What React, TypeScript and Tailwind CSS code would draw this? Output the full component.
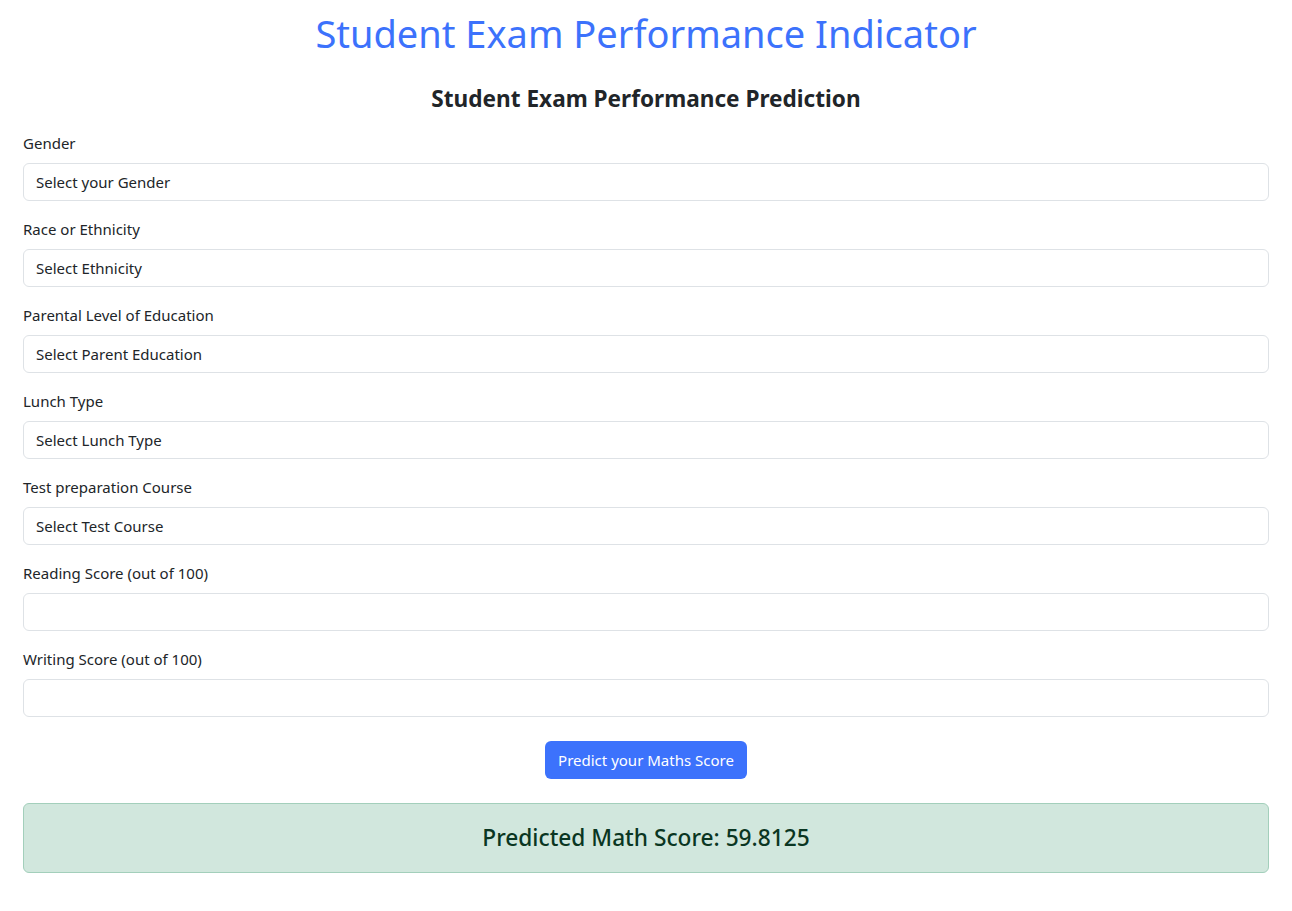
import React from 'react';

type FieldProps = {
  label: string;
  placeholder?: string;
};

const Field = ({ label, placeholder }: FieldProps) => {
  return (
    <div className="mb-4">
      <label className="block mb-2 text-[15px] leading-6 text-[#212529]">{label}</label>
      <div className="h-[38px] w-full rounded-[6px] border border-[#dee2e6] bg-white px-3 flex items-center text-[15px] text-[#212529]">
        {placeholder}
      </div>
    </div>
  );
};

const fields: FieldProps[] = [
  { label: 'Gender', placeholder: 'Select your Gender' },
  { label: 'Race or Ethnicity', placeholder: 'Select Ethnicity' },
  { label: 'Parental Level of Education', placeholder: 'Select Parent Education' },
  { label: 'Lunch Type', placeholder: 'Select Lunch Type' },
  { label: 'Test preparation Course', placeholder: 'Select Test Course' },
  { label: 'Reading Score (out of 100)' },
  { label: 'Writing Score (out of 100)' },
];

export default function App() {
  return (
    <div
      className="min-h-screen bg-white px-[23px]"
      style={{ fontFamily: '"Noto Sans", "Open Sans", sans-serif' }}
    >
      <h1 className="pt-[9px] text-center text-[38px] leading-[48px] text-[#3c72fc]">
        Student Exam Performance Indicator
      </h1>
      <h2 className="mt-[27px] mb-[18px] text-center text-[22.6px] leading-[29px] font-bold text-[#212529]">
        Student Exam Performance Prediction
      </h2>
      <form>
        {fields.map((f) => (
          <Field key={f.label} label={f.label} placeholder={f.placeholder} />
        ))}
        <div className="mt-6 flex justify-center">
          <button
            type="button"
            className="h-[38px] rounded-[6px] bg-[#3c72fc] px-[13px] text-[15px] text-white"
          >
            Predict your Maths Score
          </button>
        </div>
      </form>
      <div className="mt-6 h-[70px] rounded-[6px] border border-[#a3cfbb] bg-[#d1e7dd] flex items-center justify-center">
        <h3 className="text-[22.7px] font-medium text-[#0a3622]">Predicted Math Score: 59.8125</h3>
      </div>
    </div>
  );
}
